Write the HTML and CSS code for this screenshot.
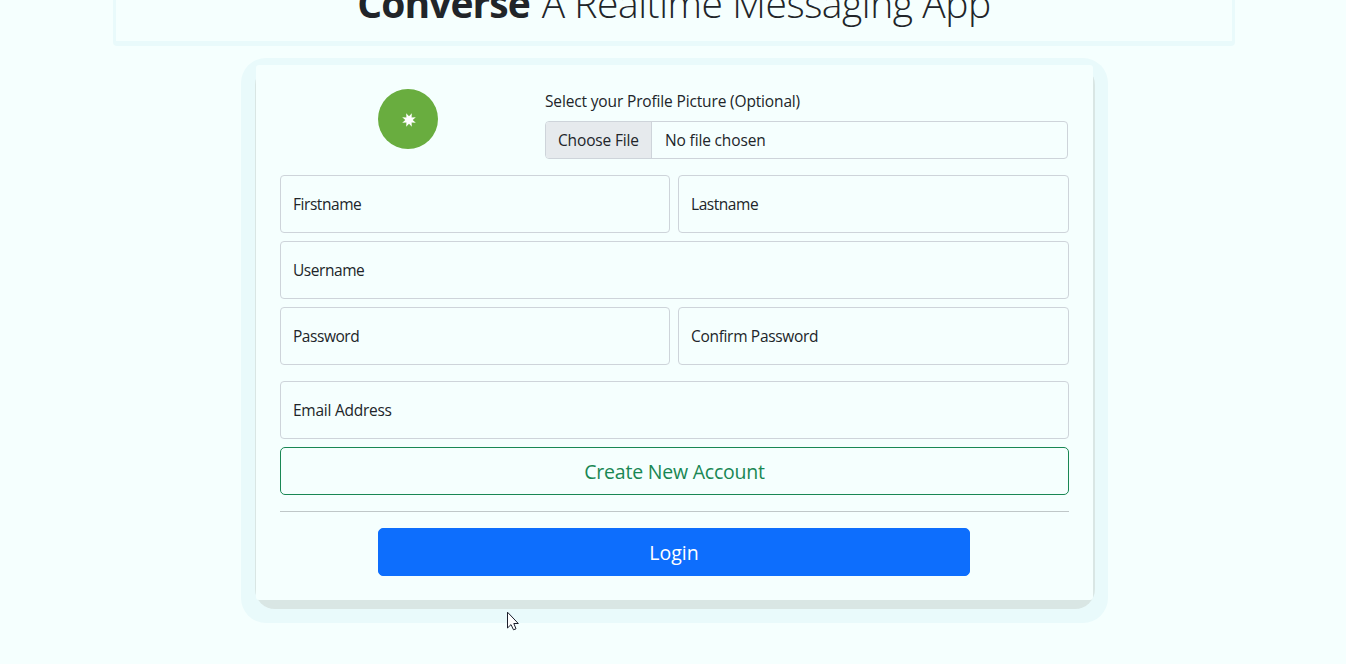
FILE: index.html
```html
<!DOCTYPE html>
<html lang="en">
<head>
<meta charset="utf-8">
<title>Converse</title>
<link rel="stylesheet" href="styles.css">
</head>
<body>
<header class="banner"><h1 class="title"><b class="brand">Converse</b> <span class="tagline">A Realtime Messaging App</span></h1></header>
<main class="halo">
  <form class="card">
    <div class="profile">
      <div class="avatar"><svg width="16" height="16" viewBox="0 0 16 16"><path fill="#fff" d="M14.8 10.8 10.6 10.6 10.8 14.8 8 11.7 5.2 14.8 5.4 10.6 1.2 10.8 4.3 8 1.2 5.2 5.4 5.4 5.2 1.2 8 4.3 10.8 1.2 10.6 5.4 14.8 5.2 11.7 8Z"/></svg></div>
      <div class="picture">
        <div class="label">Select your Profile Picture (Optional)</div>
        <div class="file"><span class="choose">Choose File</span><span class="chosen">No file chosen</span></div>
      </div>
    </div>
    <div class="row">
      <div class="field short">Firstname</div>
      <div class="field short">Lastname</div>
    </div>
    <div class="field short">Username</div>
    <div class="row passwords">
      <div class="field short">Password</div>
      <div class="field confirm">Confirm Password</div>
    </div>
    <div class="field email">Email Address</div>
    <button type="button" class="btn create">Create New Account</button>
    <hr class="rule">
    <button type="button" class="btn login">Login</button>
  </form>
</main>
<svg class="cursor" width="14" height="21" viewBox="0 0 14 21"><path fill="#fff" stroke="#1b1e2b" d="M1.5 1.2V17L5 13.6 7.5 18.8 10 17.8 7.8 12.5H12.3Z"/></svg>
</body>
</html>
```
FILE: styles.css
```css
* { box-sizing: border-box; }
body {
  margin: 0;
  height: 664px;
  overflow: hidden;
  background: #f5fffe;
  color: #212529;
  font: 400 15.5px/24px "Open Sans", "Noto Sans", sans-serif;
  letter-spacing: -0.15px;
}
.banner {
  display: flex;
  align-items: flex-end;
  justify-content: center;
  width: 1122px;
  height: 46px;
  margin-left: 113px;
  padding-bottom: 14px;
  border: solid #e9fafb;
  border-width: 0 3px 5px;
  border-radius: 0 0 4px 4px;
}
.title {
  margin: 0;
  font-size: 39px;
  line-height: 48px;
  font-weight: 300;
  letter-spacing: -0.45px;
  white-space: nowrap;
}
.brand { margin-right: 2px; font-weight: 700; letter-spacing: -0.9px; }
.halo {
  position: relative;
  z-index: 0;
  width: 867px;
  height: 565px;
  margin: 12px 0 0 241px;
  padding: 7px 15px 0;
  border-radius: 25px;
  background: #e9fafb;
}
.halo::before {
  content: "";
  position: absolute;
  inset: 7px 13.5px 14px;
  border-radius: 20px;
  background: #d9e6e4;
}
.card {
  position: relative;
  z-index: 0;
  height: 535px;
  padding: 24px;
  border-radius: 3px;
  background: #f5fffe;
}
.profile {
  display: grid;
  grid-template-columns: 256px 523px;
  gap: 9px;
  margin-bottom: 16px;
}
.avatar {
  display: flex;
  align-items: center;
  justify-content: center;
  justify-self: center;
  width: 60px;
  height: 60px;
  padding: 2px 0 0 1px;
  border-radius: 50%;
  background: #69ad3f;
}
.label { height: 24px; margin-bottom: 8px; }
.file {
  display: flex;
  height: 38px;
  border: 1px solid #ced4da;
  border-radius: 4px;
  overflow: hidden;
  line-height: 37px;
}
.choose {
  width: 106px;
  padding-left: 12px;
  border-right: 1px solid #ced4da;
  background: #e6eaed;
}
.chosen { padding-left: 13px; }
.row {
  display: grid;
  grid-template-columns: 390px 391px;
  gap: 8px;
  margin-bottom: 8px;
}
.field {
  display: flex;
  align-items: center;
  height: 58px;
  margin-bottom: 8px;
  padding-left: 12px;
  border: 1px solid #ced4da;
  border-radius: 4px;
}
.short { letter-spacing: -0.45px; }
.confirm { letter-spacing: -0.32px; }
.email { letter-spacing: -0.25px; }
.row .field { margin-bottom: 0; }
.row.passwords { margin-bottom: 16px; }
.btn {
  display: block;
  width: 100%;
  height: 48px;
  padding: 2px 0 0;
  border: 1px solid;
  border-radius: 5px;
  font: 400 19.5px/30px "Open Sans", "Noto Sans", sans-serif;
  letter-spacing: -0.22px;
}
.create { border-color: #198754; background: transparent; color: #198754; }
.rule { height: 1px; margin: 16px 0; border: 0; background: #bfc7c8; }
.login {
  width: 592px;
  margin: 0 0 0 98px;
  border-color: #0d6efd;
  background: #0d6efd;
  color: #fff;
  letter-spacing: 0;
}
.cursor { position: absolute; left: 506px; top: 611px; z-index: 2; }
```
